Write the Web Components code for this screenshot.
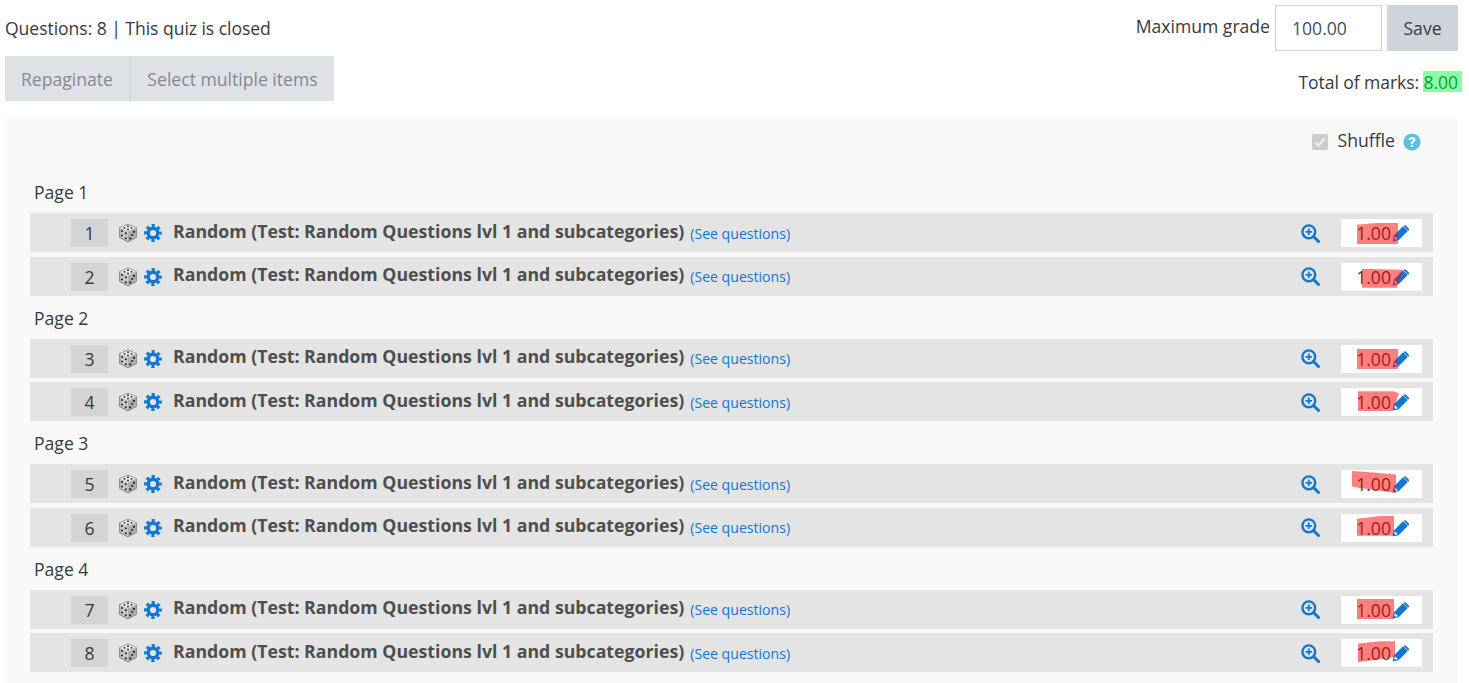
<!DOCTYPE html>
<html lang="en">
<head>
<meta charset="utf-8">
<title>Edit quiz</title>
<style>
html, body { margin: 0; height: 683px; overflow: hidden; background: #fff; }
body { font-family: "Open Sans", "Liberation Sans", sans-serif; font-size: 17.6px; color: #373a3c; }
</style>
</head>
<body>
<quiz-app>
	<quiz-header questions="8" grade="100.00" total="8.00"></quiz-header>
	<quiz-panel>
		<quiz-page label="Page 1">
			<quiz-slot num="1" hl="16,4,41,21" poly="0 8%,45% 0,100% 0,100% 100%,0 100%">Random (Test: Random Questions lvl 1 and subcategories)</quiz-slot>
			<quiz-slot num="2" hl="21,5,41,20" poly="0 5%,100% 10%,85% 100%,0 100%">Random (Test: Random Questions lvl 1 and subcategories)</quiz-slot>
		</quiz-page>
		<quiz-page label="Page 2">
			<quiz-slot num="3" hl="16,4,41,20">Random (Test: Random Questions lvl 1 and subcategories)</quiz-slot>
			<quiz-slot num="4" hl="17,3,41,20" poly="0 0,85% 0,100% 10%,85% 100%,0 100%">Random (Test: Random Questions lvl 1 and subcategories)</quiz-slot>
		</quiz-page>
		<quiz-page label="Page 3">
			<quiz-slot num="5" hl="11,1,44,22" poly="0 0,40% 5%,100% 15%,100% 100%,10% 75%,0 70%">Random (Test: Random Questions lvl 1 and subcategories)</quiz-slot>
			<quiz-slot num="6" hl="16,2,37,20" poly="0 15%,70% 0,100% 0,100% 100%,0 100%">Random (Test: Random Questions lvl 1 and subcategories)</quiz-slot>
		</quiz-page>
		<quiz-page label="Page 4">
			<quiz-slot num="7" hl="16,3,37,20">Random (Test: Random Questions lvl 1 and subcategories)</quiz-slot>
			<quiz-slot num="8" hl="17,2,37,21" poly="0 10%,60% 0,100% 0,100% 75%,0 100%">Random (Test: Random Questions lvl 1 and subcategories)</quiz-slot>
		</quiz-page>
	</quiz-panel>
</quiz-app>

<script>
// outer wrapper, just stacks header and panel
class QuizApp extends HTMLElement {
	constructor() {
		super();
		this.attachShadow({ mode: 'open' });
		this.shadowRoot.innerHTML = `
		<style>
			:host { display: block; }
		</style>
		<slot></slot>`;
	}
}

// top of the page: status text, buttons, grade form
class QuizHeader extends HTMLElement {
	constructor() {
		super();
		this.attachShadow({ mode: 'open' });
		this.shadowRoot.innerHTML = `
		<style>
			:host { display: flex; justify-content: space-between; height: 119px; padding: 5px 11px 0 5px; box-sizing: border-box; }
			.status { margin: 12px 0 0 0; height: 23px; line-height: 23px; letter-spacing: -.06px; }
			.btns { display: flex; gap: 2px; margin-top: 16px; background: #d6dade; }
			.btns span { height: 45px; line-height: 47px; background: #dee2e6; color: #85898d; text-align: center; }
			.right { display: flex; flex-direction: column; align-items: flex-end; }
			form { display: flex; align-items: center; margin: 0; }
			label { margin: -4px 5px 0 0; }
			.val { width: 107px; height: 46px; box-sizing: border-box; border: 1px solid #ced4da; padding-left: 16px; line-height: 44px; color: #495057; background: #fff; }
			.save { width: 71px; height: 46px; line-height: 46px; margin-left: 5px; background: #ced4da; text-align: center; color: #373a3c; }
			.total { position: relative; margin: 20px 0 0 0; height: 23px; line-height: 23px; letter-spacing: -.09px; }
			.hl { position: absolute; right: -4px; top: 0; width: 39px; height: 21px; background: rgba(0, 255, 64, .47); }
		</style>
		<div>
			<div class="status">Questions: ${this.getAttribute('questions')} | This quiz is closed</div>
			<div class="btns"><span style="width:124px">Repaginate</span><span style="width:203px">Select multiple items</span></div>
		</div>
		<div class="right">
			<form>
				<label>Maximum grade</label>
				<div class="val">${this.getAttribute('grade')}</div>
				<div class="save">Save</div>
			</form>
			<div class="total">Total of marks: ${this.getAttribute('total')}<i class="hl"></i></div>
		</div>`;
	}
}

// grey box with the shuffle option on top and the pages below
class QuizPanel extends HTMLElement {
	constructor() {
		super();
		this.attachShadow({ mode: 'open' });
		this.shadowRoot.innerHTML = `
		<style>
			:host { display: block; margin: 0 11px 0 5px; padding: 11px 25px 30px; background: #f9f9f9; }
			.shuffle { display: flex; justify-content: flex-end; align-items: center; height: 22px; padding-right: 12px; margin-bottom: 22px; }
			.shuffle span:nth-child(2) { margin-top: -2px; }
			.check { width: 16px; height: 16px; border-radius: 2px; background: #ccc; display: flex; margin: 2px 10px 0 0; }
			.help { margin: 2px 0 0 8px; display: block; }
		</style>
		<div class="shuffle">
			<span class="check"><svg width="16" height="16" viewBox="0 0 16 16"><path d="M3.5 8.5l3 3 6-7" fill="none" stroke="#eee" stroke-width="2.4"/></svg></span>
			<span>Shuffle</span>
			<svg class="help" width="18" height="18" viewBox="0 0 18 18">
				<circle cx="9" cy="9" r="8.6" fill="#5bc0de"/>
				<path d="M5.600 7c.2-2 1.600-3.100 3.500-3.100 2 0 3.400 1.200 3.400 2.900 0 1.300-.8 2-1.600 2.500-.7.5-1 .8-1 1.500H7.800c0-1.400.5-2.100 1.400-2.700.6-.4 1-.7 1-1.200 0-.6-.5-1-1.100-1-.8 0-1.200.5-1.300 1.200z" fill="#fff"/>
				<rect x="7.800" y="11.900" width="2.100" height="2.100" fill="#fff"/>
			</svg>
		</div>
		<slot></slot>`;
	}
}

// one page heading with its question rows
class QuizPage extends HTMLElement {
	constructor() {
		super();
		this.attachShadow({ mode: 'open' });
		this.shadowRoot.innerHTML = `
		<style>
			:host { display: block; height: 125.500px; }
			.label { height: 39px; line-height: 23px; padding: 7px 0 0 4px; box-sizing: border-box; }
			.rows { display: flex; flex-direction: column; gap: 4.500px; }
		</style>
		<div class="label">${this.getAttribute('label')}</div>
		<div class="rows"><slot></slot></div>`;
	}
}

// one question row, hl = x,y,w,h of the hand drawn red marker over the mark box
class QuizSlot extends HTMLElement {
	constructor() {
		super();
		const [x, y, w, h] = (this.getAttribute('hl') || '0,0,0,0').split(',');
		const poly = this.getAttribute('poly');
		this.attachShadow({ mode: 'open' });
		this.shadowRoot.innerHTML = `
		<style>
			:host { display: flex; align-items: center; height: 39.200px; background: #e4e4e4; padding-left: 41px; box-sizing: border-box; }
			.num { width: 37px; height: 28px; line-height: 28px; background: #d4d4d4; text-align: center; margin: 1px 10px 0 0; }
			.icons { display: flex; align-items: center; gap: 6px; margin: 1px 11px 0 0; }
			.icons svg { display: block; }
			.title { font-weight: 700; font-size: 17.730px; color: #4e4e4e; margin-top: -3.800px; }
			a { font-size: 14.100px; color: #1177d1; margin: 1px 0 0 6px; text-decoration: none; }
			.zoom { margin: 1px 21px 0 auto; display: block; }
			.mark { position: relative; width: 81px; height: 28px; line-height: 28px; margin: 1px 11px 0 0; background: #fff; display: flex; justify-content: flex-end; align-items: center; padding-right: 12px; box-sizing: border-box; }
			.mark span { margin-right: 1px; }
			.mark svg { display: block; }
			.hl { position: absolute; left: ${x}px; top: ${y}px; width: ${w}px; height: ${h}px; background: rgba(255, 0, 0, .5); ${poly ? `clip-path: polygon(${poly});` : ''} }
		</style>
		<div class="num">${this.getAttribute('num')}</div>
		<div class="icons">
			<svg width="20" height="20" viewBox="0 0 20 20">
				<path d="M10 1.200l8.300 3.400v9.900L10 18.900l-8.300-4.400V4.600z" fill="#c8c8c4" stroke="#66665f" stroke-width=".8"/>
				<path d="M10 1.400l8 3.200-8 4-8-4z" fill="#e8e8e4"/>
				<path d="M18 4.800v9.500l-8 4.300V8.700z" fill="#aeaea9"/>
				<g fill="#1c1c1c">
					<circle cx="10" cy="3.200" r=".9"/><circle cx="6.500" cy="4.800" r=".9"/><circle cx="13.500" cy="4.800" r=".9"/><circle cx="10" cy="6.500" r=".9"/>
					<circle cx="4" cy="8" r="1"/><circle cx="7.800" cy="10.200" r="1"/><circle cx="4" cy="12.600" r="1"/><circle cx="7.800" cy="15.200" r="1"/>
					<circle cx="12.200" cy="15.400" r="1.100"/><circle cx="16" cy="8.800" r="1.100"/><circle cx="14.100" cy="12" r="1"/>
				</g>
			</svg>
			<svg width="18" height="18" viewBox="0 0 18 18" fill="none" stroke="#1177d1">
				<circle cx="9" cy="9" r="4.800" stroke-width="3.400"/>
				<circle cx="9" cy="9" r="7.300" stroke-width="3.200" stroke-dasharray="3.130 2.600" stroke-dashoffset="1.560"/>
			</svg>
		</div>
		<span class="title"><slot></slot></span>
		<a>(See questions)</a>
		<svg class="zoom" width="19" height="19" viewBox="0 0 19 19" fill="none" stroke="#1177d1">
			<circle cx="7.800" cy="7.800" r="6.400" stroke-width="2.400"/>
			<path d="M12.500 12.500l5 5" stroke-width="3" stroke-linecap="round"/>
			<path d="M7.800 4.500v6.600M4.500 7.800h6.600" stroke-width="1.800"/>
		</svg>
		<div class="mark">
			<span>1.00</span>
			<svg width="18" height="18" viewBox="0 0 18 18">
				<path d="M.6 17.400l1.200-6 9.200-9.200 4.800 4.800-9.200 9.200z" fill="#1177d1"/>
				<path d="M11.800 1.800c.7-.7 1.500-.7 2.200 0l2.500 2.500c.7.700.7 1.500 0 2.200l-.3.300-4.700-4.700z" fill="#1177d1"/>
				<path d="M2.900 12.200l3 3-2.300.6-1.300-1.300z" fill="#fff"/>
			</svg>
			<i class="hl"></i>
		</div>`;
	}
}

customElements.define('quiz-app', QuizApp);
customElements.define('quiz-header', QuizHeader);
customElements.define('quiz-panel', QuizPanel);
customElements.define('quiz-page', QuizPage);
customElements.define('quiz-slot', QuizSlot);
</script>
</body>
</html>
